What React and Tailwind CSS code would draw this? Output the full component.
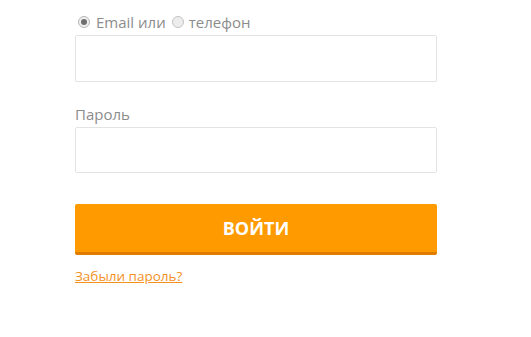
export default function App() {
  return (
    <div className="min-h-[337px] w-[531px] bg-white font-['Open_Sans',sans-serif]">
      <div className="ml-[75px] w-[362px] pt-[12px]">
        {/* Login type */}
        <div className="flex h-[20px] items-center text-[15px] leading-[20px] text-[#8c8c8c]">
          <span className="mr-[6px] ml-[3px] flex h-[12px] w-[12px] items-center justify-center rounded-full border border-[#b5b5b5] bg-[#f0f0f0]">
            <span className="h-[6px] w-[6px] rounded-full bg-[#6e6e6e]" />
          </span>
          <span>Email или</span>
          <span className="mr-[5px] ml-[6px] h-[12px] w-[12px] rounded-full border border-[#c4c4c4] bg-[#ececec]" />
          <span>телефон</span>
        </div>
        <div className="mt-[3px] h-[47px] rounded-[2px] border border-[#e3e3e3] bg-white" />

        {/* Password */}
        <div className="mt-[22px] h-[20px] text-[15px] leading-[20px] text-[#8c8c8c]">Пароль</div>
        <div className="mt-[3px] h-[46px] rounded-[2px] border border-[#e3e3e3] bg-white" />

        <button className="mt-[31px] flex h-[51px] w-full items-center justify-center rounded-[2px] border-b-[3px] border-[#e07d00] bg-[#ff9a00] text-[18px] font-bold text-white">
          ВОЙТИ
        </button>

        <a href="#" className="mt-[11px] block text-[13.5px] leading-[20px] text-[#f5911e] underline">
          Забыли пароль?
        </a>
      </div>
    </div>
  )
}
